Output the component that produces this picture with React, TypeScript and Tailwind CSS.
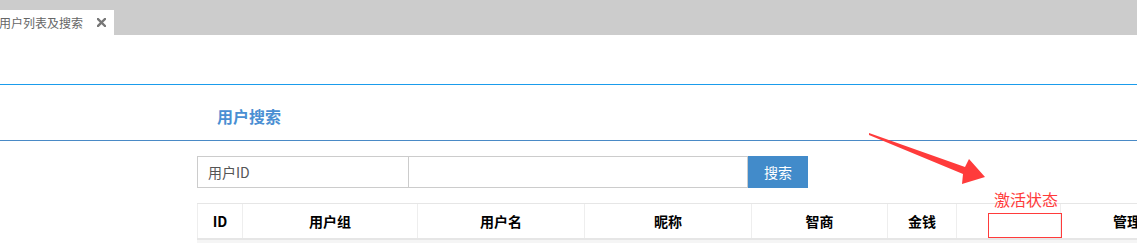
import React from 'react';

const cjk = { fontFamily: '"Noto Sans CJK SC", "Liberation Sans", sans-serif' };

const columns = [
  { label: 'ID', w: 'w-[46px]' },
  { label: '用户组', w: 'w-[175px]' },
  { label: '用户名', w: 'w-[167px]' },
  { label: '昵称', w: 'w-[167px]' },
  { label: '智商', w: 'w-[136px]' },
  { label: '金钱', w: 'w-[69px]' },
  { label: '', w: 'w-[104px]' },
  { label: '管理', w: 'w-[132px]' },
];

const TabBar: React.FC = () => (
  <div className="flex h-[35px] items-end bg-[#cccccc]">
    <div className="flex h-[25px] w-[114px] items-center bg-white">
      <span className="-ml-px text-[12px] leading-none text-[#666666]">用户列表及搜索</span>
      <svg className="ml-[14px]" width="9" height="9" viewBox="0 0 9 9">
        <path d="M1 1 L8 8 M8 1 L1 8" stroke="#777777" strokeWidth="2.4" strokeLinecap="square" />
      </svg>
    </div>
  </div>
);

const SearchForm: React.FC = () => (
  <div className="flex h-[32px] w-[611px]">
    <div className="flex w-[212px] items-center border border-[#cccccc] pl-[10px] text-[14px] text-[#555555]">
      用户ID
    </div>
    <div className="flex-1 border-y border-r border-[#cccccc]" />
    <button className="w-[60px] bg-[#428bca] text-[14px] text-white">搜索</button>
  </div>
);

const UserTable: React.FC = () => (
  <div className="w-[940px]">
    <div className="flex h-[37px] border-t border-b-2 border-[#e6e6e6]">
      {columns.map((c, i) => (
        <div
          key={i}
          className={`${c.w} flex shrink-0 items-center justify-center text-[14px] font-bold text-black ${
            i === 0 ? 'border-l' : ''
          } ${i < columns.length - 1 ? 'border-r' : ''} border-[#eeeeee]`}
        >
          {c.label}
        </div>
      ))}
    </div>
    <div className="h-[30px] bg-[#f5f5f5]" />
  </div>
);

const Annotation: React.FC = () => (
  <>
    <svg className="absolute left-0 top-0" width="1137" height="243" viewBox="0 0 1137 243">
      <polygon
        points="869,133 965,167 969,159 985,177 962,184 963,174 869,135"
        fill="#ff3b3b"
      />
    </svg>
    <div className="absolute left-[994px] top-[189px] text-[16px] leading-[20px] text-[#ff3b3b]">激活状态</div>
    <div className="absolute left-[988px] top-[213px] h-[25px] w-[74px] border border-[#ff3b3b]" />
  </>
);

export default function App() {
  return (
    <div className="relative h-[243px] w-[1137px] overflow-hidden bg-white" style={cjk}>
      <TabBar />
      <div className="h-[49px]" />
      <div className="border-t border-[#1a9cec]" />
      <div className="flex h-[56px] items-center border-b border-[#4a8ac6] pl-[217px] pt-[6px]">
        <span className="text-[16px] font-bold text-[#4a8fd3]">用户搜索</span>
      </div>
      <div className="pl-[197px] pt-[15px]">
        <SearchForm />
        <div className="pt-[15px]">
          <UserTable />
        </div>
      </div>
      <Annotation />
    </div>
  );
}
